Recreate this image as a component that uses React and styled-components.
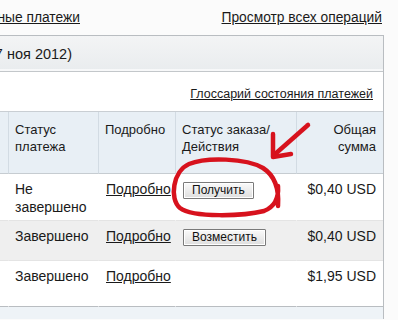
import React from 'react';
import styled, { createGlobalStyle } from 'styled-components';

const GlobalStyle = createGlobalStyle`
  html, body {
    margin: 0;
    padding: 0;
    background: #fbfbfb;
    overflow: hidden;
  }
  body {
    font-family: "Liberation Sans", Arial, sans-serif;
    color: #1a1a1a;
  }
`;

const Frame = styled.div`
  position: relative;
  width: 398px;
  height: 320px;
  overflow: hidden;
`;

const TopBar = styled.div`
  height: 35px;
  display: flex;
  align-items: center;
  justify-content: space-between;
  padding-right: 16px;
  font-size: 13.8px;
`;

const Clip = styled.div`
  width: ${(p) => p.w}px;
  display: flex;
  justify-content: flex-end;
  overflow: hidden;
  white-space: nowrap;
`;

const Link = styled.a`
  color: #1a1a1a;
  text-decoration: underline;
  white-space: nowrap;
  cursor: pointer;
`;

const Panel = styled.div`
  width: 383px;
  border-top: 1px solid #b9bdc1;
  border-right: 1px solid #b9bdc1;
  background: #fff;
`;

const DateBand = styled.div`
  height: 35px;
  display: flex;
  align-items: center;
  font-size: 14.5px;
  background: linear-gradient(#f3f4f5, #e9ecee);
  border-bottom: 1px solid #c3c7ca;
  box-shadow: inset 0 -2px 0 #f7f8f9;
`;

const GlossaryRow = styled.div`
  height: 39px;
  display: flex;
  align-items: center;
  justify-content: flex-end;
  padding: 4px 10px 0 0;
  box-sizing: border-box;
  font-size: 12.5px;
`;

const Table = styled.div`
  border-top: 1px solid #c9ced3;
  display: grid;
  grid-template-columns: 8px 90px 77px 121px 1fr;
`;

const Row = styled.div`
  display: contents;
`;

const Cell = styled.div`
  height: ${(p) => p.h}px;
  box-sizing: border-box;
  padding: ${(p) => p.pt}px 7px 0 ${(p) => (p.pl ?? 6)}px;
  background: ${(p) => p.bg};
  border-left: ${(p) => (p.first ? 'none' : `1px solid ${p.line}`)};
  border-bottom: 1px solid ${(p) => p.under};
  text-align: ${(p) => (p.right ? 'right' : 'left')};
  font-size: ${(p) => p.fs}px;
  line-height: ${(p) => p.lh}px;
`;

const Button = styled.button`
  font-family: "Liberation Sans", Arial, sans-serif;
  font-size: 12px;
  height: 17px;
  padding: 0 8px;
  margin-top: -1px;
  color: #111;
  border: 1px solid #7a7a7a;
  border-radius: 1px;
  background: linear-gradient(#fafafa, #dedede);
  box-shadow: inset 0 0 0 1px #fff;
  line-height: 15px;
`;

const Footer = styled.div`
  height: 12px;
  background: #eef3f7;
`;

const Overlay = styled.svg`
  position: absolute;
  left: 0;
  top: 0;
  pointer-events: none;
`;

const headerCols = [
  null,
  <>Статус<br />платежа</>,
  'Подробно',
  <>Статус заказа/<br />Действия</>,
  <>Общая<br />сумма</>,
];

const rows = [
  { status: ['Не', 'завершено'], action: 'Получить', amount: '$0,40 USD', h: 47, bg: '#fff' },
  { status: ['Завершено'], action: 'Возместить', amount: '$0,40 USD', h: 40, bg: '#efefef' },
  { status: ['Завершено'], action: null, amount: '$1,95 USD', h: 46, bg: '#fff' },
];

function HeaderRow() {
  const common = { h: 62, pt: 9, fs: 13, lh: 17, bg: '#e8eff5', line: '#d2dbe3', under: '#c6ccd1' };
  return (
    <Row>
      {headerCols.map((t, i) => (
        <Cell key={i} {...common} first={i === 0} right={i === 4} pl={i === 0 ? 0 : 6}>
          {t}
        </Cell>
      ))}
    </Row>
  );
}

function DataRow({ r, last }) {
  const common = { h: r.h, pt: 6, fs: 14, lh: 18, bg: r.bg, line: 'transparent', under: last ? '#b9bdc1' : '#e4e4e4' };
  return (
    <Row>
      <Cell {...common} first pl={0} />
      <Cell {...common}>
        {r.status.map((s, i) => (
          <div key={i}>{s}</div>
        ))}
      </Cell>
      <Cell {...common} pl={7}>
        <Link>Подробно</Link>
      </Cell>
      <Cell {...common} pl={7}>
        {r.action && <Button>{r.action}</Button>}
      </Cell>
      <Cell {...common} right>
        {r.amount}
      </Cell>
    </Row>
  );
}

export default function App() {
  return (
    <Frame>
      <GlobalStyle />
      <TopBar>
        <Clip w={80}>
          <Link>Отклоненные платежи</Link>
        </Clip>
        <Link>Просмотр всех операций</Link>
      </TopBar>
      <Panel>
        <DateBand>
          <Clip w={72}>(10 ноя 2012 - 17 ноя 2012)</Clip>
        </DateBand>
        <GlossaryRow>
          <Link>Глоссарий состояния платежей</Link>
        </GlossaryRow>
        <Table>
          <HeaderRow />
          {rows.map((r, i) => (
            <DataRow key={i} r={r} last={i === rows.length - 1} />
          ))}
        </Table>
        <Footer />
      </Panel>
      <Overlay width="398" height="320" viewBox="0 0 398 320">
        <g fill="none" stroke="#d7121d" strokeWidth="4.5" strokeLinecap="round" strokeLinejoin="round">
          <path d="M278 206 C279 192 277 177 263 168 C246 158 206 157 189 164 C173 171 169 199 180 208 C193 218 244 216 264 211 C274 207 279 199 278 186" />
          <path d="M308 125 L274 155" />
          <path d="M273 134 L273 157 L291 154" />
        </g>
      </Overlay>
    </Frame>
  );
}
